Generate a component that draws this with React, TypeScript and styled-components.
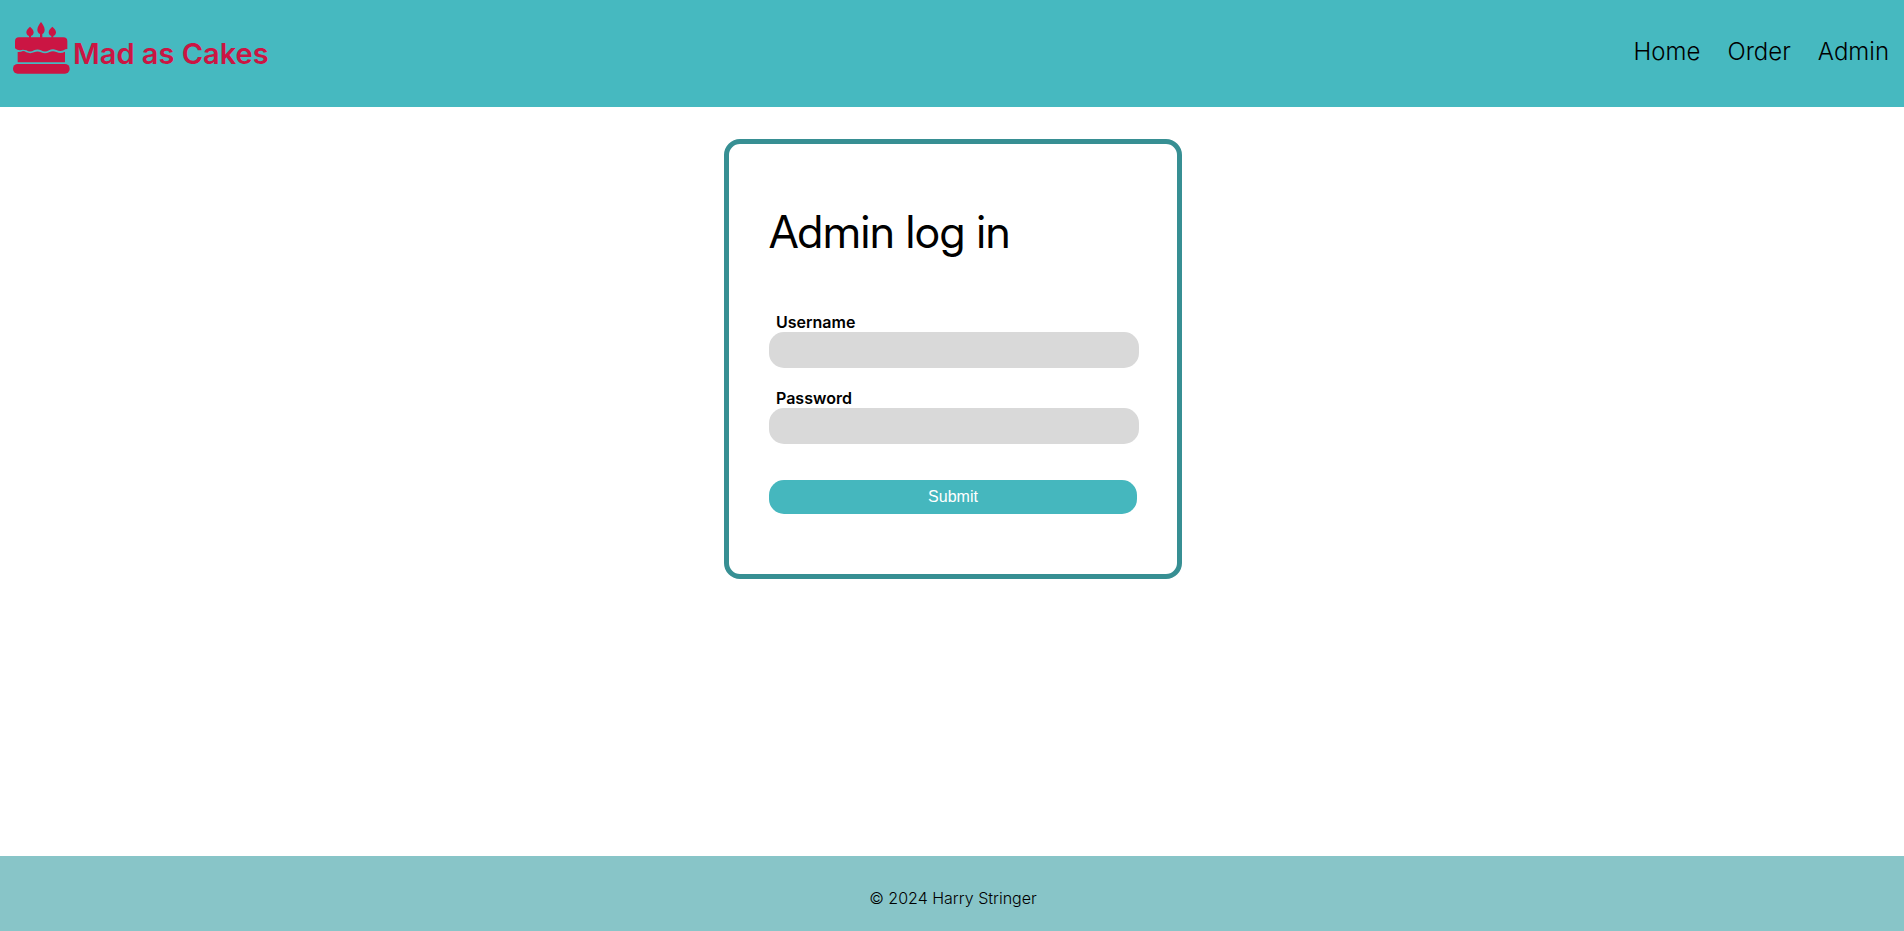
import React from 'react';
import styled, { createGlobalStyle } from 'styled-components';

const GlobalStyle = createGlobalStyle`
  *, *::before, *::after { box-sizing: border-box; }
  body {
    margin: 0;
    background: #fff;
    color: #000;
    font-family: Inter, "Liberation Sans", sans-serif;
    font-size: 16px;
    font-weight: 300;
  }
`;

const Page = styled.div`
  display: flex;
  flex-direction: column;
  min-height: 100vh;
`;

const Header = styled.header`
  display: flex;
  justify-content: space-between;
  align-items: flex-start;
  padding: 22px 15px 33px 13px;
  background: #46b9c0;
`;

const Brand = styled.a`
  display: flex;
  align-items: flex-end;
  gap: 3px;
  color: #cb1543;
  font-size: 29px;
  font-weight: 600;
  line-height: 40px;
  text-decoration: none;
`;

const CakeIcon = styled.svg`
  display: block;
  width: 57px;
  height: 52px;
  fill: currentColor;
`;

const Nav = styled.nav`
  display: flex;
  gap: 27px;
  padding-top: 15px;
`;

const NavLink = styled.a`
  color: #000;
  font-size: 24px;
  line-height: 29px;
  text-decoration: none;
`;

const Main = styled.main`
  flex: 1;
  display: flex;
  justify-content: center;
  align-items: flex-start;
  padding: 32px 16px 32px 18px;
`;

const LoginCard = styled.form`
  width: 100%;
  max-width: 458px;
  padding: 60px 38px 60px 40px;
  border: 5px solid #378f93;
  border-radius: 16px;
`;

const Title = styled.h1`
  margin: 0 0 54px;
  font-family: "Inter Display", Inter, "Liberation Sans", sans-serif;
  font-size: 45px;
  font-weight: 400;
  line-height: 55px;
`;

const Field = styled.div`
  display: flex;
  flex-direction: column;
  margin-bottom: 21px;
`;

const Label = styled.label`
  padding-left: 7px;
  font-weight: 600;
  line-height: 19px;
`;

const Input = styled.input`
  width: 100%;
  height: 36px;
  padding: 0 12px;
  border: 0;
  border-radius: 15px;
  background: #d9d9d9;
  font: inherit;
`;

const SubmitButton = styled.button`
  display: block;
  width: calc(100% - 2px);
  height: 34px;
  margin-top: 36px;
  padding: 0;
  border: 0;
  border-radius: 15px;
  background: #45b7be;
  color: #fff;
  font-family: "Liberation Sans", Arial, sans-serif;
  font-size: 16px;
  cursor: pointer;
`;

const Footer = styled.footer`
  padding: 33px 16px 23px 18px;
  background: #88c5c8;
  line-height: 19px;
  text-align: center;
`;

const links = ['Home', 'Order', 'Admin'];

const fields = [
  { id: 'username', label: 'Username', type: 'text' },
  { id: 'password', label: 'Password', type: 'password' },
];

export default function App() {
  return (
    <Page>
      <GlobalStyle />
      <Header>
        <Brand href="#">
          <CakeIcon viewBox="39 66 171 156" aria-hidden="true">
            <path d="M123 66C127 72 134 80 134 89C134 96 131 100 127 102V113H120V102C116 100 112 96 112 89C112 80 119 72 123 66Z" />
            <path d="M90 80C95 85 101 90 101 97C101 103 97 107 93 108V113H87V108C83 107 79 103 79 97C79 90 85 85 90 80Z" />
            <path d="M157 80C162 85 168 90 168 97C168 103 164 107 160 108V113H154V108C150 107 146 103 146 97C146 90 152 85 157 80Z" />
            <path d="M57 112H190Q202 112 202 124V147Q196 147 191 151Q180 156 169 150Q158 145 147 151Q135 158 123 151Q113 146 102 151Q90 158 79 151Q68 147 60 151Q51 151 45 145V124Q45 112 57 112Z" />
            <path d="M53 156Q61 157 69 153Q74 153 79 157Q91 162 102 157Q113 152 123 157Q135 163 147 157Q158 151 169 156Q182 162 195 155V187H53Z" />
            <rect x="39" y="192" width="170" height="29" rx="14" />
          </CakeIcon>
          Mad as Cakes
        </Brand>
        <Nav>
          {links.map((text) => (
            <NavLink key={text} href="#">{text}</NavLink>
          ))}
        </Nav>
      </Header>
      <Main>
        <LoginCard onSubmit={(event) => event.preventDefault()}>
          <Title>Admin log in</Title>
          {fields.map(({ id, label, type }) => (
            <Field key={id}>
              <Label htmlFor={id}>{label}</Label>
              <Input id={id} name={id} type={type} />
            </Field>
          ))}
          <SubmitButton type="submit">Submit</SubmitButton>
        </LoginCard>
      </Main>
      <Footer>© 2024 Harry Stringer</Footer>
    </Page>
  );
}
